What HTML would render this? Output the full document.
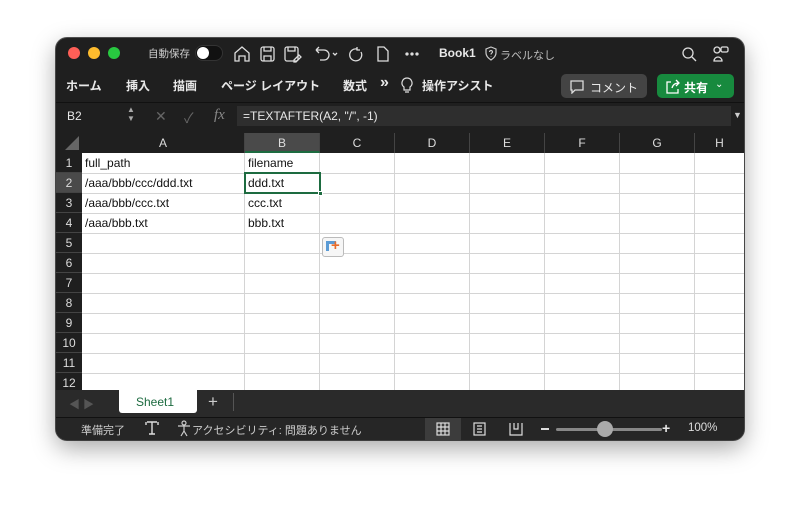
<!DOCTYPE html>
<html><head><meta charset="utf-8"><style>
*{margin:0;padding:0;box-sizing:border-box}
body{width:800px;height:514px;background:#fff;font-family:"Liberation Sans","Noto Sans CJK JP",sans-serif;position:relative;overflow:hidden}
.win{position:absolute;left:56px;top:38px;width:688px;height:402px;background:#1f1f1f;border-radius:11px;overflow:hidden;box-shadow:0 8px 24px rgba(0,0,0,.35),0 0 0 1px #555}
.a{position:absolute}
.t{color:#e8e8e8;font-size:12px;white-space:nowrap}
.grid{position:absolute;left:0;top:95px;width:688px;height:257px;background:#fff}
.ch{position:absolute;top:0;height:20px;background:#1f1f1f;color:#ddd;font-size:12px;text-align:center;line-height:20px;border-right:1px solid #444}
.rh{position:absolute;left:0;width:26px;height:20px;background:#1f1f1f;color:#ddd;font-size:12px;text-align:center;line-height:20px;border-bottom:1px solid #444}
.cell{position:absolute;font-size:12px;color:#111;line-height:20px;padding-left:3px}
</style></head><body>
<div class="win">
<div class="a" style="left:12px;top:9px;width:12px;height:12px;border-radius:50%;background:#fe5f57"></div>
<div class="a" style="left:32px;top:9px;width:12px;height:12px;border-radius:50%;background:#febc2e"></div>
<div class="a" style="left:52px;top:9px;width:12px;height:12px;border-radius:50%;background:#28c840"></div>
<div class="a t" style="left:92px;top:8px;font-size:10.5px;color:#ccc">自動保存</div>
<div class="a" style="left:139px;top:7px;width:28px;height:16px;border-radius:8px;background:#111;border:1px solid #333"></div>
<div class="a" style="left:141px;top:9px;width:12px;height:12px;border-radius:50%;background:#fff"></div>
<svg class="a" style="left:176px;top:6px" width="200" height="20" fill="none" stroke="#ddd" stroke-width="1.3">
<path d="M3 9l7-6 7 6v8h-4v-5h-6v5h-4z"/>
<rect x="29" y="3" width="13" height="14" rx="2"/><path d="M32 3v4h7V3M32 17v-5h7v5"/>
<rect x="53" y="3" width="13" height="14" rx="2"/><path d="M56 3v4h7V3"/><path d="M62 16l5-5 2 2-5 5h-2z"/>
<path d="M84 6h8a5 5 0 010 10h-4M84 6l3-3M84 6l3 3"/><path d="M101 9l2 2 2-2"/>
<path d="M125 5a6 6 0 104 3M125 3v3h3"/>
<path d="M146 3h6l4 4v10h-10z"/>
<circle cx="175" cy="10" r="1" fill="#ddd"/><circle cx="180" cy="10" r="1" fill="#ddd"/><circle cx="185" cy="10" r="1" fill="#ddd"/>
</svg>
<div class="a t" style="left:383px;top:8px;font-weight:bold">Book1</div>
<svg class="a" style="left:428px;top:8px" width="14" height="15" fill="none" stroke="#ccc" stroke-width="1.2"><path d="M7 1l5 2v4c0 3-2 5-5 7-3-2-5-4-5-7V3z"/><path d="M5.5 6a1.5 1.5 0 113 0c0 1-1.5 1-1.5 2.5M7 10v.5"/></svg>
<div class="a t" style="left:444px;top:9px;font-size:11px;color:#bbb">ラベルなし</div>
<svg class="a" style="left:624px;top:7px" width="60" height="20" fill="none" stroke="#ddd" stroke-width="1.3"><circle cx="8" cy="8" r="5"/><path d="M12 12l4 4"/><circle cx="37" cy="5" r="3"/><rect x="41" y="2" width="7" height="5" rx="1.5"/><path d="M34 16a4 4 0 018 0z"/></svg>
<div class="a t" style="left:10px;top:39px;font-weight:bold">ホーム</div>
<div class="a t" style="left:70px;top:39px;font-weight:bold">挿入</div>
<div class="a t" style="left:117px;top:39px;font-weight:bold">描画</div>
<div class="a t" style="left:165px;top:39px;font-weight:bold">ページ レイアウト</div>
<div class="a t" style="left:287px;top:39px;font-weight:bold">数式</div>
<div class="a t" style="left:324px;top:36px;font-weight:bold;font-size:16px">»</div>
<svg class="a" style="left:345px;top:39px" width="12" height="17" fill="none" stroke="#ddd" stroke-width="1.2"><path d="M6 1a5 5 0 00-3 9v3h6v-3a5 5 0 00-3-9zM4 15h4"/></svg>
<div class="a t" style="left:366px;top:39px;font-weight:bold">操作アシスト</div>
<div class="a" style="left:505px;top:36px;width:86px;height:24px;background:#444;border-radius:5px"></div>
<svg class="a" style="left:513px;top:41px" width="16" height="15" fill="none" stroke="#ddd" stroke-width="1.3"><path d="M2 2h12v9H6l-3 3v-3H2z"/></svg>
<div class="a t" style="left:534px;top:41px">コメント</div>
<div class="a" style="left:601px;top:36px;width:77px;height:24px;background:#178a3e;border-radius:5px"></div>
<svg class="a" style="left:609px;top:41px" width="16" height="15" fill="none" stroke="#fff" stroke-width="1.3"><path d="M6 3H2v11h11v-4M7 9c1-4 4-5 7-5M11 1l3 3-3 3"/></svg>
<div class="a t" style="left:628px;top:41px;color:#fff;font-weight:bold">共有</div>
<div class="a t" style="left:659px;top:41px;color:#fff;font-size:10px">⌄</div>
<div class="a" style="left:0;top:64px;width:688px;height:1px;background:#111"></div>
<div class="a t" style="left:11px;top:71px">B2</div>
<div class="a t" style="left:71px;top:67px;font-size:8px;line-height:9px;color:#aaa">▲<br>▼</div>
<div class="a t" style="left:99px;top:70px;color:#666;font-size:14px">✕</div>
<div class="a t" style="left:128px;top:70px;color:#666;font-size:14px">✓</div>
<div class="a" style="left:158px;top:69px;color:#888;font-family:'Liberation Serif',serif;font-style:italic;font-size:15px">fx</div>
<div class="a" style="left:181px;top:68px;width:494px;height:20px;background:#2e2e2e"></div>
<div class="a t" style="left:187px;top:71px">=TEXTAFTER(A2, "/", -1)</div>
<div class="a t" style="left:677px;top:72px;font-size:9px;color:#ccc">▼</div>
<div class="grid">
<div class="a" style="left:0;top:0;width:26px;height:20px;background:#1f1f1f"><div style="position:absolute;right:3px;bottom:3px;width:0;height:0;border-left:14px solid transparent;border-bottom:14px solid #666"></div></div>
<div class="ch" style="left:26px;width:163px">A</div>
<div class="ch" style="left:189px;width:75px;background:#4a4a4a;border-bottom:2px solid #1d6b40">B</div>
<div class="ch" style="left:264px;width:75px">C</div>
<div class="ch" style="left:339px;width:75px">D</div>
<div class="ch" style="left:414px;width:75px">E</div>
<div class="ch" style="left:489px;width:75px">F</div>
<div class="ch" style="left:564px;width:75px">G</div>
<div class="ch" style="left:639px;width:49px;border:0">H</div>
<svg class="a" style="left:26px;top:20px" width="662" height="240">
<g stroke="#d4d4d4" stroke-width="1">
<path d="M0 20.5h662M0 40.5h662M0 60.5h662M0 80.5h662M0 100.5h662M0 120.5h662M0 140.5h662M0 160.5h662M0 180.5h662M0 200.5h662M0 220.5h662"/>
<path d="M162.5 0v240M237.5 0v240M312.5 0v240M387.5 0v240M462.5 0v240M537.5 0v240M612.5 0v240"/>
</g></svg>
<div class="rh" style="top:20px">1</div><div class="rh" style="top:40px;background:#4a4a4a">2</div><div class="rh" style="top:60px">3</div><div class="rh" style="top:80px">4</div><div class="rh" style="top:100px">5</div><div class="rh" style="top:120px">6</div><div class="rh" style="top:140px">7</div><div class="rh" style="top:160px">8</div><div class="rh" style="top:180px">9</div><div class="rh" style="top:200px">10</div><div class="rh" style="top:220px">11</div><div class="rh" style="top:240px">12</div>
<div class="cell" style="left:26px;top:20px">full_path</div>
<div class="cell" style="left:189px;top:20px">filename</div>
<div class="cell" style="left:26px;top:40px">/aaa/bbb/ccc/ddd.txt</div>
<div class="cell" style="left:26px;top:60px">/aaa/bbb/ccc.txt</div>
<div class="cell" style="left:26px;top:80px">/aaa/bbb.txt</div>
<div class="cell" style="left:189px;top:60px">ccc.txt</div>
<div class="cell" style="left:189px;top:80px">bbb.txt</div>
<div class="a" style="left:188px;top:39px;width:77px;height:22px;border:2px solid #1d6b40"></div>
<div class="cell" style="left:189px;top:40px">ddd.txt</div>
<div class="a" style="left:262px;top:58px;width:5px;height:5px;background:#1d6b40;border:1px solid #fff"></div>
<div class="a" style="left:266px;top:104px;width:22px;height:20px;border:1px solid #bbb;border-radius:3px;background:#f6f6f6"></div>
<div class="a" style="left:270px;top:108px;width:10px;height:10px;border-left:3px solid #5b9bd5;border-top:3px solid #5b9bd5"></div>
<div class="a" style="left:275px;top:104px;color:#e86b2a;font-weight:bold;font-size:15px">+</div>
</div>
<div class="a" style="left:0;top:352px;width:688px;height:27px;background:#2a2a2a"></div>
<div class="a t" style="left:13px;top:358px;color:#555;font-size:11px">◀ ▶</div>
<div class="a" style="left:63px;top:352px;width:78px;height:23px;background:#fff;border-radius:0 0 3px 3px"></div>
<div class="a" style="left:80px;top:357px;color:#1d6b40;font-size:12px">Sheet1</div>
<div class="a t" style="left:152px;top:354px;font-size:17px;color:#ccc">+</div>
<div class="a" style="left:177px;top:355px;width:1px;height:18px;background:#555"></div>
<div class="a" style="left:0;top:379px;width:688px;height:23px;background:#262626;border-top:1px solid #111"></div>
<div class="a t" style="left:25px;top:384px;font-size:11px;color:#ccc">準備完了</div>
<svg class="a" style="left:88px;top:382px" width="16" height="16" fill="none" stroke="#ddd" stroke-width="1.4"><path d="M3 2h10M8 2v12M5 14h6M2 2v3M14 2v3"/></svg>
<svg class="a" style="left:120px;top:382px" width="16" height="17" fill="none" stroke="#ccc" stroke-width="1.2"><circle cx="8" cy="3" r="2"/><path d="M2 6h12M8 6v5l-3 5M8 11l3 5"/></svg>
<div class="a t" style="left:136px;top:384px;font-size:11px;color:#ccc">アクセシビリティ: 問題ありません</div>
<div class="a" style="left:369px;top:380px;width:36px;height:22px;background:#3c3c3c"></div>
<svg class="a" style="left:380px;top:384px" width="120" height="14" fill="none" stroke="#ddd" stroke-width="1.2"><rect x="1" y="1" width="12" height="12"/><path d="M5 1v12M9 1v12M1 5h12M1 9h12"/><rect x="38" y="1" width="11" height="12"/><path d="M41 4h5M41 7h5M41 10h5"/><path d="M74 1v12h12V1M78 1v6h4V1"/></svg>
<div class="a" style="left:485px;top:390px;width:8px;height:2px;background:#ddd"></div>
<div class="a" style="left:500px;top:390px;width:106px;height:3px;border-radius:2px;background:#888"></div>
<div class="a" style="left:541px;top:383px;width:16px;height:16px;border-radius:50%;background:#aaa"></div>
<div class="a t" style="left:606px;top:382px;font-size:14px;font-weight:bold">+</div>
<div class="a t" style="left:632px;top:384px;font-size:11.5px;color:#ddd">100%</div>
</div>
</body></html>
